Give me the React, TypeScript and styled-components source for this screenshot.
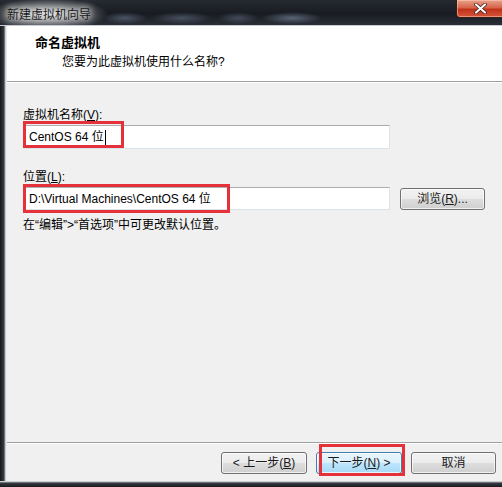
import React from "react";
import styled, { createGlobalStyle } from "styled-components";

const GlobalStyle = createGlobalStyle`
  html, body {
    margin: 0;
    padding: 0;
    background: #1d2026;
  }
  body {
    font-family: "Liberation Sans", "Noto Sans CJK SC", sans-serif;
    font-size: 12px;
    color: #000;
  }
`;

const Window = styled.div`
  width: 502px;
  height: 487px;
  display: flex;
  flex-direction: column;
  background: #23262c;
  overflow: hidden;
`;

const TitleBar = styled.div`
  height: 25px;
  flex: none;
  display: flex;
  align-items: flex-start;
  justify-content: space-between;
  border-bottom: 1px solid #c8ccd2;
  background:
    radial-gradient(ellipse 22px 6px at 125px 18px, rgba(110, 125, 150, 0.55), transparent),
    radial-gradient(ellipse 30px 6px at 182px 18px, rgba(110, 125, 150, 0.5), transparent),
    radial-gradient(ellipse 20px 6px at 238px 18px, rgba(110, 125, 150, 0.45), transparent),
    radial-gradient(ellipse 30px 6px at 292px 18px, rgba(130, 145, 170, 0.6), transparent),
    radial-gradient(ellipse 60px 16px at 48px 14px, rgba(235, 235, 235, 0.85), transparent),
    linear-gradient(180deg, #262a31 0%, #181b21 55%, #2a2f37 100%);
`;

const Title = styled.div`
  padding: 7px 0 0 7px;
  line-height: 16px;
  color: #1a1a1a;
  text-shadow: 0 0 6px #fff, 0 0 10px #fff;
`;

const CloseButton = styled.div`
  width: 46px;
  height: 17px;
  margin-right: -2px;
  display: flex;
  align-items: center;
  justify-content: center;
  border: 1px solid #3a1c16;
  border-top: none;
  border-radius: 0 0 0 4px;
  background: linear-gradient(180deg, #e9a18c 0%, #d7644a 45%, #c0321a 55%, #d5553a 100%);
  box-shadow: inset 0 0 0 1px rgba(255, 210, 190, 0.5);
`;

const Body = styled.div`
  flex: 1;
  display: flex;
  min-height: 0;
`;

const LeftFrame = styled.div`
  width: 6px;
  flex: none;
  background: linear-gradient(90deg, #16181c 0%, #3a3e45 70%, #c9ced4 84%, #c9ced4 100%);
`;

const Client = styled.div`
  flex: 1;
  display: flex;
  flex-direction: column;
  background: #f0f0f0;
  border-left: 1px solid #e8e8e8;
`;

const Header = styled.div`
  height: 56px;
  flex: none;
  background: #fff;
  border-bottom: 1px solid #a0a0a0;
  box-shadow: 0 1px 0 #fff;
  padding: 9px 0 0 28px;
  box-sizing: border-box;
`;

const HeaderTitle = styled.div`
  font-weight: bold;
  font-size: 13px;
  line-height: 16px;
`;

const HeaderSubtitle = styled.div`
  padding-left: 27px;
  margin-top: 3px;
  line-height: 16px;
`;

const Content = styled.div`
  flex: 1;
  padding: 25px 0 0 16px;
  display: flex;
  flex-direction: column;
`;

const Label = styled.div`
  line-height: 16px;
  margin-bottom: 2px;
`;

const Key = styled.span`
  text-decoration: underline;
`;

const FieldRow = styled.div`
  display: flex;
  align-items: center;
  gap: 10px;
  margin-bottom: 20px;
`;

const InputBox = styled.div<{ $height: number }>`
  position: relative;
  width: 367px;
  height: ${({ $height }) => $height}px;
  box-sizing: border-box;
  background: #fff;
  border: 1px solid #dbe3ea;
  border-top-color: #abadb3;
  display: flex;
  align-items: center;
  padding-left: 5px;
  line-height: 16px;
  white-space: pre;
`;

const Caret = styled.span`
  display: inline-block;
  width: 1px;
  height: 15px;
  background: #000;
  margin-left: 1px;
`;

const Highlight = styled.div<{ $left: number; $top: number; $width: number; $height: number }>`
  position: absolute;
  left: ${({ $left }) => $left}px;
  top: ${({ $top }) => $top}px;
  width: ${({ $width }) => $width}px;
  height: ${({ $height }) => $height}px;
  box-sizing: border-box;
  border: 3px solid #e5323a;
  pointer-events: none;
`;

const Note = styled.div`
  line-height: 16px;
  margin-top: -13px;
`;

const ButtonBar = styled.div`
  height: 39px;
  flex: none;
  border-top: 1px solid #a0a0a0;
  box-shadow: inset 0 1px 0 #fff;
  display: flex;
  justify-content: flex-end;
  align-items: flex-start;
  padding: 9px 6px 0 0;
  box-sizing: border-box;
  gap: 9px;
`;

const Button = styled.div<{ $width?: number; $active?: boolean }>`
  position: relative;
  width: ${({ $width }) => $width ?? 86}px;
  height: 22px;
  box-sizing: border-box;
  display: flex;
  align-items: center;
  justify-content: center;
  white-space: pre;
  border: 1px solid ${({ $active }) => ($active ? "#3c7fb1" : "#707070")};
  border-radius: 3px;
  line-height: 16px;
  color: #1a1a1a;
  background: ${({ $active }) =>
    $active
      ? "linear-gradient(180deg, #eaf6fd 0%, #d9f0fc 50%, #bee6fd 51%, #a7d9f5 100%)"
      : "linear-gradient(180deg, #f2f2f2 0%, #ebebeb 50%, #dddddd 51%, #cfcfcf 100%)"};
  box-shadow: inset 0 0 0 1px rgba(255, 255, 255, 0.7);
`;

const BottomFrame = styled.div`
  height: 6px;
  flex: none;
  background: linear-gradient(180deg, #c9ced4 0%, #c9ced4 16%, #3a3e45 30%, #16181c 100%);
`;

export default function App() {
  return (
    <>
      <GlobalStyle />
      <Window>
        <TitleBar>
          <Title>新建虚拟机向导</Title>
          <CloseButton>
            <svg width="13" height="11" viewBox="0 0 13 11">
              <path
                d="M2 1.5 L11 9.5 M11 1.5 L2 9.5"
                stroke="#3a1510"
                strokeWidth="3.6"
                strokeLinecap="round"
              />
              <path
                d="M2 1.5 L11 9.5 M11 1.5 L2 9.5"
                stroke="#fff"
                strokeWidth="2.2"
                strokeLinecap="round"
              />
            </svg>
          </CloseButton>
        </TitleBar>
        <Body>
          <LeftFrame />
          <Client>
            <Header>
              <HeaderTitle>命名虚拟机</HeaderTitle>
              <HeaderSubtitle>您要为此虚拟机使用什么名称?</HeaderSubtitle>
            </Header>
            <Content>
              <Label>
                虚拟机名称(<Key>V</Key>):
              </Label>
              <FieldRow>
                <InputBox $height={24}>
                  CentOS 64 位<Caret />
                  <Highlight $left={-1} $top={-5} $width={101} $height={27} />
                </InputBox>
              </FieldRow>
              <Label>
                位置(<Key>L</Key>):
              </Label>
              <FieldRow>
                <InputBox $height={23}>
                  D:\Virtual Machines\CentOS 64 位
                  <Highlight $left={-1} $top={-4} $width={207} $height={29} />
                </InputBox>
                <Button $width={85}>
                  浏览(<Key>R</Key>)...
                </Button>
              </FieldRow>
              <Note>在“编辑”&gt;“首选项”中可更改默认位置。</Note>
            </Content>
            <ButtonBar>
              <Button>
                &lt; 上一步(<Key>B</Key>)
              </Button>
              <Button $active>
                下一步(<Key>N</Key>) &gt;
                <Highlight $left={2} $top={-9} $width={86} $height={32} />
              </Button>
              <Button $width={85}>取消</Button>
            </ButtonBar>
          </Client>
        </Body>
        <BottomFrame />
      </Window>
    </>
  );
}
